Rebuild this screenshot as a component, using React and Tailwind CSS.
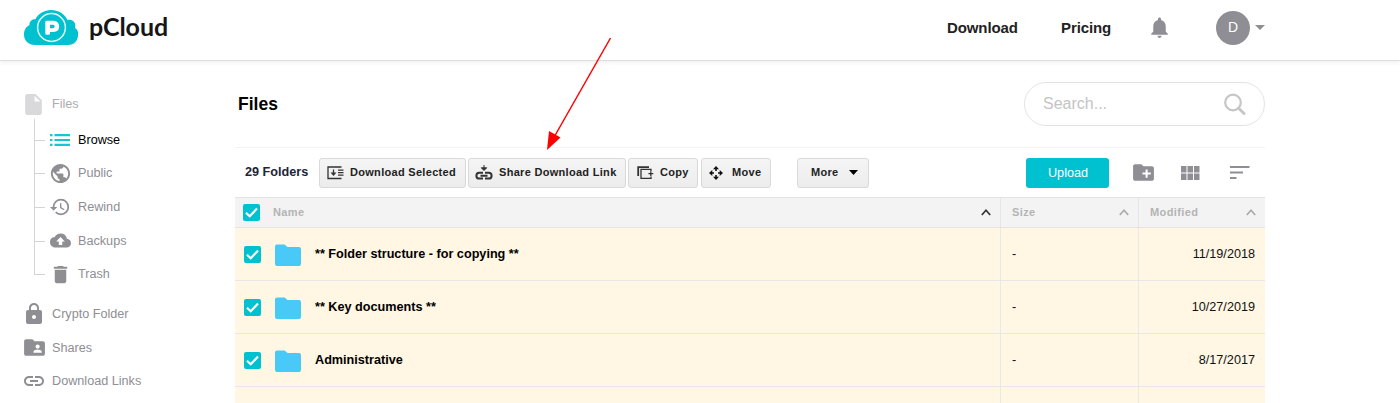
import React from 'react';
import {
  MdInsertDriveFile, MdPublic, MdHistory, MdBackup, MdDelete, MdLock, MdFolderShared,
  MdLink, MdNotifications, MdCreateNewFolder, MdViewModule, MdFolder,
} from 'react-icons/md';

function Logo() {
  return (
    <svg width="54" height="36" viewBox="24 9 54 36" className="shrink-0">
      <path d="M35 45C28.500 45 24 40.500 24 34.500C24 29.500 26.500 26.500 29.500 25C29 21.500 32 19 35.300 19.200C38.500 13.500 44.500 10 51 10C58 10 64.500 13.500 67.500 20C72 18.500 76.500 22 75 28C77.500 29.500 78.500 32 78 35C78 41 74 45 68 45Z" fill="#00c1d0" />
      <circle cx="51.500" cy="27.500" r="13.900" fill="#00c1d0" stroke="#e5fafc" strokeWidth="1.500" />
      <path fillRule="evenodd" d="M46.500 20.700H53.500Q59.200 21.200 59.200 26.400T53.500 32H50V33.500Q50 34.700 48.800 34.700H46.500Q45.300 34.700 45.300 33.500V22Q45.300 20.700 46.500 20.700ZM50 24.800V28.200H53Q54.700 28.200 54.700 26.500T53 24.800Z" fill="#fff" />
    </svg>
  );
}

function Header() {
  return (
    <header className="flex h-[61px] shrink-0 items-center border-b border-[#dedede] shadow-[0_1px_5px_rgba(0,0,0,0.08)]">
      <div className="flex w-[947px] items-center pl-6 pb-[6px]">
        <Logo />
        <span className="ml-[11px] pb-[2px] font-[Lato,sans-serif] text-[25px] leading-[30px] font-bold tracking-[-0.1px] text-[#161616]">pCloud</span>
      </div>
      <nav className="flex items-center pb-1 text-[15px] font-bold tracking-[-0.1px] text-[#222]">
        <span className="w-[114px]">Download</span>
        <span className="w-[86px]">Pricing</span>
      </nav>
      <MdNotifications className="mb-[5px] size-[25px] text-[#8f8e94]" />
      <div className="mb-[5px] ml-[44px] flex size-[34px] items-center justify-center rounded-full bg-[#8f8e94] text-[14px] text-white">D</div>
      <svg width="10" height="5" viewBox="0 0 10 5" className="mb-[6px] ml-[5px]"><path d="M0 0H10L5 5Z" fill="#8f8e94" /></svg>
    </header>
  );
}

function BrowseIcon() {
  return (
    <svg width="20" height="12" viewBox="0 0 20 12">
      <path d="M0 1.200H2.500M4.500 1.200H20M0 6H2.500M4.500 6H20M0 10.800H2.500M4.500 10.800H20" stroke="#17c5d3" strokeWidth="2.200" />
    </svg>
  );
}

const tree = [
  { label: 'Browse', icon: <BrowseIcon />, active: true },
  { label: 'Public', icon: <MdPublic className="size-[23px] shrink-0" /> },
  { label: 'Rewind', icon: <MdHistory className="size-[22px] shrink-0" /> },
  { label: 'Backups', icon: <MdBackup className="size-[21px] shrink-0" /> },
  { label: 'Trash', icon: <MdDelete className="size-[23px] shrink-0" /> },
];

const links = [
  { label: 'Crypto Folder', icon: <MdLock className="size-[24px] shrink-0" /> },
  { label: 'Shares', icon: <MdFolderShared className="size-[25px] shrink-0" /> },
  { label: 'Download Links', icon: <MdLink className="size-[24px] shrink-0" /> },
];

function Sidebar() {
  return (
    <aside className="w-[235px] shrink-0 pt-[31px] text-[12.65px] text-[#8e8e93]">
      <div className="flex h-6 items-center pl-[21px] text-[#acacb0]">
        <MdInsertDriveFile className="size-[25px] text-[#d9d9dc]" />
        <span className="ml-[6px] pt-px">Files</span>
      </div>
      <div className="mt-[3px] flex pl-[34px]">
        <div className="h-[156px] w-px bg-[#d4d4d4]" />
        <ul className="pt-[4px]">
          {tree.map((t) => (
            <li key={t.label} className="flex h-[33.67px] items-center">
              <span className="mt-px h-px w-[10px] bg-[#d4d4d4]" />
              <span className="ml-[4px] flex w-[22px] justify-center">{t.icon}</span>
              <span className={t.active ? 'ml-[7px] pt-px text-black' : 'ml-[7px] pt-px'}>{t.label}</span>
            </li>
          ))}
        </ul>
      </div>
      <ul className="mt-[6px]">
        {links.map((t) => (
          <li key={t.label} className="flex h-[33.67px] items-center pl-[22px]">
            <span className="flex w-[24px] justify-center">{t.icon}</span>
            <span className="ml-[6px] pt-px">{t.label}</span>
          </li>
        ))}
      </ul>
    </aside>
  );
}

const btn = 'flex h-[30px] shrink-0 items-center rounded-[3px] border border-[#d9d9d9] bg-linear-to-b from-[#f5f5f5] to-[#ececec] text-[11px] font-bold tracking-[0.3px] whitespace-nowrap text-[#222]';

function DownloadIcon() {
  return (
    <svg width="17" height="14" viewBox="0 0 17 14" fill="none" stroke="#333">
      <path d="M14.500 1H1V12.500H14.500" strokeWidth="1.300" />
      <path d="M6.500 3.500V9" strokeWidth="1.300" />
      <path d="M3.500 6.500H9.500L6.500 10Z" fill="#333" stroke="none" />
      <path d="M11 4.200H16.500M11 6.700H16.500M11 9.200H16.500" strokeWidth="1.300" />
    </svg>
  );
}

function ShareIcon() {
  return (
    <svg width="18" height="15" viewBox="0 0 18 15" fill="none" stroke="#333">
      <path d="M9 0V5M6.300 2.800H11.700L9 5.500Z" fill="#333" strokeWidth="1" />
      <path d="M8 7.800H4.300A2.900 2.900 0 0 0 4.300 13.600H8M10 7.800H13.700A2.900 2.900 0 0 1 13.700 13.600H10M5.500 10.700H12.500" strokeWidth="2" />
    </svg>
  );
}

function CopyIcon() {
  return (
    <svg width="17" height="14" viewBox="0 0 17 14" fill="none" stroke="#333">
      <path d="M1.200 10V1.200H12" strokeWidth="1.800" />
      <path d="M14 5V3.300H4V12.400H14V10.500M13.800 5.200V10M11.400 7.600H16.300" strokeWidth="1.300" />
    </svg>
  );
}

function MoveIcon() {
  return (
    <svg width="14" height="14" viewBox="0 0 14 14" fill="#111">
      <path d="M7 0L10 3.300H7.800V5H6.200V3.300H4ZM7 14L4 10.700H6.200V9H7.800V10.700H10ZM0 7L3.300 4V6.200H5V7.800H3.300V10ZM14 7L10.700 10V7.800H9V6.200H10.700V4Z" />
    </svg>
  );
}

function Toolbar() {
  return (
    <div className="flex h-[50px] items-center border-t border-[#f3f3f3]">
      <span className="w-[84px] shrink-0 pl-[10px] text-[12.65px] font-bold whitespace-nowrap text-[#1c2536]">29 Folders</span>
      <button className={`${btn} w-[147px] pl-[7px]`}><DownloadIcon /><span className="ml-[6px]">Download Selected</span></button>
      <button className={`${btn} ml-[2px] w-[158px] pl-[6px]`}><ShareIcon /><span className="ml-[6px]">Share Download Link</span></button>
      <button className={`${btn} ml-[2px] w-[70px] pl-[8px]`}><CopyIcon /><span className="ml-[6px]">Copy</span></button>
      <button className={`${btn} ml-[3px] w-[70px] pl-[7px]`}><MoveIcon /><span className="ml-[9px]">Move</span></button>
      <button className={`${btn} ml-[26px] w-[72px] pl-[13px]`}>
        <span>More</span>
        <svg width="9" height="5" viewBox="0 0 9 5" className="ml-[11px]"><path d="M0 0H9L4.500 5Z" fill="#000" /></svg>
      </button>
      <button className="ml-[157px] flex h-[30px] w-[83px] shrink-0 items-center justify-center rounded-[3px] bg-[#00c1d0] pt-px pl-px text-[12.65px] text-white">Upload</button>
      <div className="flex shrink-0 items-center text-[#8f8e94]">
        <MdCreateNewFolder className="ml-[22px] size-[25px]" />
        <svg width="19" height="14" viewBox="0 0 19 14" className="ml-[25px]"><path d="M0 0H5.500V6.500H0ZM6.500 0H12V6.500H6.500ZM13 0H18.500V6.500H13ZM0 7.500H5.500V14H0ZM6.500 7.500H12V14H6.500ZM13 7.500H18.500V14H13Z" fill="#8f8e94" /></svg>
        <svg width="20" height="13" viewBox="0 0 20 13" className="ml-[30px]"><path d="M0 1H19.500M0 6.500H13M0 12H6.500" stroke="#8f8e94" strokeWidth="1.800" /></svg>
      </div>
    </div>
  );
}

function Check() {
  return (
    <svg width="17" height="17" viewBox="0 0 17 17" className="shrink-0">
      <rect width="17" height="17" rx="2" fill="#00c1d0" />
      <path d="M3 8.800L6.700 12.300L14 4.600" fill="none" stroke="#fff" strokeWidth="2.200" />
    </svg>
  );
}

function Caret({ color }) {
  return <svg width="10" height="7" viewBox="0 0 10 7"><path d="M0.800 6L5 1.300L9.200 6" fill="none" stroke={color} strokeWidth="1.700" /></svg>;
}

const rows = [
  { name: '** Folder structure - for copying **', date: '11/19/2018' },
  { name: '** Key documents **', date: '10/27/2019' },
  { name: 'Administrative', date: '8/17/2017' },
];

const cols = 'grid grid-cols-[765px_138px_127px]';

function Table() {
  return (
    <div>
      <div className={`${cols} h-[31px] border-y border-[#e3e3e3] bg-[#f3f3f3] text-[11px] font-bold tracking-[0.4px] text-[#b4b4b4]`}>
        <div className="flex items-center pl-2">
          <Check />
          <span className="ml-[13px] flex-1">Name</span>
          <span className="mr-[9px]"><Caret color="#333" /></span>
        </div>
        <div className="flex items-center justify-between border-l border-[#e6e6e6] pr-[9px] pl-[11px]"><span>Size</span><Caret color="#aaa" /></div>
        <div className="flex items-center justify-between border-l border-[#e6e6e6] pr-[9px] pl-[11px]"><span>Modified</span><Caret color="#aaa" /></div>
      </div>
      {rows.map((r) => (
        <div key={r.name} className={`${cols} h-[53px] border-b border-[#e7e6e8] bg-[#fff6e4] text-[12.65px] text-[#111]`}>
          <div className="flex items-center pt-px pl-[9px]">
            <Check />
            <svg width="26" height="22" viewBox="0 0 26 22" className="mt-px ml-[14px]"><path d="M2 0.500H9.500L12.500 3H24Q26 3 26 5V20Q26 22 24 22H2Q0 22 0 20V2.500Q0 0.500 2 0.500Z" fill="#48c9f8" /></svg>
            <span className="ml-[14px] font-bold text-black">{r.name}</span>
          </div>
          <div className="flex items-center border-l border-[#e9e8e8] pt-px pl-[11px]">-</div>
          <div className="flex items-center justify-end border-l border-[#e9e8e8] pt-px pr-[10px]">{r.date}</div>
        </div>
      ))}
      <div className={`${cols} h-[16px] bg-[#fff6e4]`}>
        <div />
        <div className="border-l border-[#e9e8e8]" />
        <div className="border-l border-[#e9e8e8]" />
      </div>
    </div>
  );
}

export default function App() {
  return (
    <div className="relative flex h-[403px] w-[1400px] flex-col overflow-hidden bg-white font-['Liberation_Sans',Arial,sans-serif]">
      <Header />
      <div className="flex">
        <Sidebar />
        <main className="w-[1030px] shrink-0">
          <div className="flex h-[86px] items-center justify-between">
            <h1 className="pl-[3px] text-[17.500px] font-bold text-black">Files</h1>
            <div className="flex h-[44px] w-[241px] items-center justify-between rounded-full border border-[#e4e4e4] pr-[18px] pl-[18px] text-[16px] text-[#c4c4c4]">
              <span>Search...</span>
              <svg width="23" height="23" viewBox="0 0 23 23" fill="none" stroke="#c6c6c6" strokeLinecap="round"><circle cx="10" cy="9.500" r="7.800" strokeWidth="2.200" /><path d="M15.700 15.300L21 20.500" strokeWidth="2.900" /></svg>
            </div>
          </div>
          <Toolbar />
          <Table />
        </main>
      </div>
      <svg width="70" height="115" viewBox="544 37 70 115" className="pointer-events-none absolute top-[37px] left-[544px]">
        <path d="M610.500 38L553 139" stroke="#f00" strokeWidth="1.500" />
        <path d="M547 150L549 131L560.500 137.500Z" fill="#f00" />
      </svg>
    </div>
  );
}
